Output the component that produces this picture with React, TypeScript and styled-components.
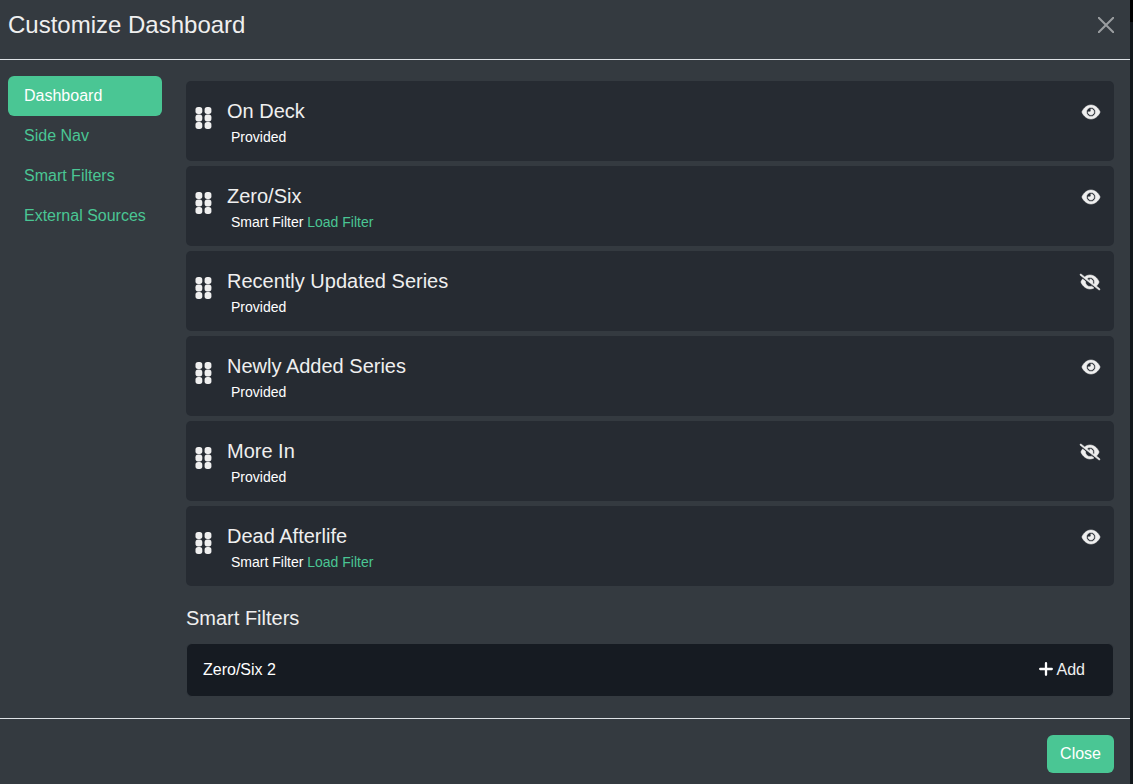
import React, { useState } from "react";
import styled, { createGlobalStyle } from "styled-components";

const GlobalStyle = createGlobalStyle`
  *, *::before, *::after { box-sizing: border-box; }
  body {
    margin: 0;
    background: linear-gradient(#000 22px, #11171b 22px);
    color: #efefef;
    font: 16px/24px "Liberation Sans", Arial, sans-serif;
  }
  button { font: inherit; cursor: pointer; }
`;

const Modal = styled.div`
  display: flex;
  flex-direction: column;
  min-height: 100vh;
  margin-right: 3px;
  background: #343a40;
`;

const Header = styled.header`
  display: flex;
  align-items: center;
  justify-content: space-between;
  padding: 7px 16px 16px 8px;
  border-bottom: 1px solid #dee2e6;
`;

const Title = styled.h1`
  margin: 0;
  font-size: 24px;
  line-height: 36px;
  font-weight: 400;
`;

const CloseIconButton = styled.button`
  display: flex;
  padding: 0;
  border: 0;
  background: none;
  color: #fff;
  opacity: 0.5;
`;

const Body = styled.div`
  display: flex;
  flex: 1;
  gap: 24px;
  padding: 16px 16px 21px 8px;
`;

const Nav = styled.nav`
  flex: 0 0 154px;
  display: flex;
  flex-direction: column;
`;

const NavLink = styled.a<{ $active: boolean }>`
  padding: 8px 16px;
  border-radius: 6px;
  text-decoration: none;
  white-space: nowrap;
  color: ${(p) => (p.$active ? "#fff" : "#4ac694")};
  background: ${(p) => (p.$active ? "#4ac694" : "transparent")};
`;

const Content = styled.main`
  flex: 1;
  min-width: 0;
  padding-top: 5px;
`;

const StreamList = styled.ul`
  display: flex;
  flex-direction: column;
  gap: 5px;
  margin: 0;
  padding: 0;
  list-style: none;
`;

const StreamCard = styled.li`
  display: flex;
  align-items: flex-start;
  min-height: 80px;
  padding: 18px 14px 10px 9px;
  border-radius: 5px;
  background: #262b32;
`;

const Grip = styled.svg`
  flex: none;
  margin: 8px 15px 0 0;
  fill: #efefef;
`;

const StreamText = styled.div`
  flex: 1;
`;

const StreamName = styled.h2`
  margin: 0;
  font-size: 20px;
  line-height: 24px;
  font-weight: 400;
`;

const StreamSource = styled.div`
  padding: 4px 4px 0;
  font-size: 14px;
  line-height: 20px;
  color: #fff;
`;

const FilterLink = styled.a`
  color: #4ac694;
  text-decoration: none;
`;

const VisibilityButton = styled.button`
  display: flex;
  margin-top: 5px;
  padding: 0;
  border: 0;
  background: none;
  color: #efefef;

  svg {
    overflow: visible;
    fill: currentColor;
    stroke: currentColor;
    stroke-width: 18;
  }
`;

const SectionTitle = styled.h2`
  margin: 20px 0 13px;
  font-size: 20px;
  line-height: 24px;
  font-weight: 400;
`;

const FilterItem = styled.li`
  display: flex;
  align-items: center;
  justify-content: space-between;
  padding: 7px 16px;
  border: 1px solid #343a40;
  border-radius: 6px;
  background: #161b22;
  color: #fff;
`;

const AddButton = styled.button`
  display: flex;
  align-items: center;
  gap: 4px;
  padding: 7px 12px;
  border: 0;
  background: none;
  color: #efefef;

  svg { margin-bottom: 2px; }
`;

const Footer = styled.footer`
  display: flex;
  justify-content: flex-end;
  padding: 16px 16px 11px;
  border-top: 1px solid #dee2e6;
`;

const CloseButton = styled.button`
  padding: 7px 13px;
  border: 0;
  border-radius: 6px;
  background: #4ac694;
  color: #fff;
`;

const tabs = ["Dashboard", "Side Nav", "Smart Filters", "External Sources"];

const initialStreams = [
  { name: "On Deck", smart: false, visible: true },
  { name: "Zero/Six", smart: true, visible: true },
  { name: "Recently Updated Series", smart: false, visible: false },
  { name: "Newly Added Series", smart: false, visible: true },
  { name: "More In", smart: false, visible: false },
  { name: "Dead Afterlife", smart: true, visible: true },
];

function GripIcon() {
  return (
    <Grip width="17" height="22" viewBox="0 0 17 22" aria-hidden="true">
      {[0.1, 7.6, 15.1].map((y) =>
        [0.5, 9.6].map((x) => (
          <rect key={`${x}-${y}`} x={x} y={y} width="6.8" height="6.8" rx="2.6" />
        ))
      )}
    </Grip>
  );
}

function EyeIcon() {
  return (
    <svg width="18" height="16" viewBox="0 0 576 512" aria-hidden="true">
      <path d="M279.6 160.4C282.4 160.1 285.2 160 288 160C341 160 384 202.1 384 256C384 309 341 352 288 352C234.1 352 192 309 192 256C192 253.2 192.1 250.4 192.4 247.6C201.7 252.1 212.5 256 224 256C259.3 256 288 227.3 288 192C288 180.5 284.1 169.7 279.6 160.4zM480.6 112.6C527.4 156 558.7 207.1 573.5 243.7C576.8 251.6 576.8 260.4 573.5 268.3C558.7 304 527.4 355.1 480.6 399.4C433.5 443.2 368.8 480 288 480C207.2 480 142.5 443.2 95.42 399.4C48.62 355.1 17.34 304 2.461 268.3C-.8205 260.4-.8205 251.6 2.461 243.7C17.34 207.1 48.62 156 95.42 112.6C142.5 68.84 207.2 32 288 32C368.8 32 433.5 68.84 480.6 112.6zM288 112C208.5 112 144 176.5 144 256C144 335.5 208.5 400 288 400C367.5 400 432 335.5 432 256C432 176.5 367.5 112 288 112z" />
    </svg>
  );
}

function EyeSlashIcon() {
  return (
    <svg width="20" height="16" viewBox="0 0 640 512" aria-hidden="true">
      <path d="M150.7 92.77C195 58.27 251.8 32 320 32C400.8 32 465.5 68.84 512.6 112.6C559.4 156 590.7 207.1 605.5 243.7C608.8 251.6 608.8 260.4 605.5 268.3C592.1 300.6 565.2 346.1 525.6 386.7L630.8 469.1C641.2 477.3 643.1 492.4 634.9 502.8C626.7 513.2 611.6 515.1 601.2 506.9L9.196 42.89C-1.236 34.71-3.065 19.63 5.112 9.196C13.29-1.236 28.37-3.065 38.81 5.112L150.7 92.77zM223.1 149.5L313.4 220.3C317.6 211.8 320 202.2 320 191.1C320 180.5 316.1 169.7 311.6 160.4C314.4 160.1 317.2 159.1 320 159.1C373 159.1 416 202.1 416 255.1C416 269.7 413.1 282.7 407.1 294.5L446.6 324.7C457.7 304.3 464 280.9 464 255.1C464 176.5 399.5 111.1 320 111.1C282.7 111.1 248.6 126.2 223.1 149.5zM320 480C239.2 480 174.5 443.2 127.4 399.4C80.62 355.1 49.34 304 34.46 268.3C31.18 260.4 31.18 251.6 34.46 243.7C44 220.8 60.29 191.2 83.09 161.5L177.4 235.8C176.5 242.4 176 249.1 176 255.1C176 335.5 240.5 400 320 400C338.7 400 356.6 396.4 373 389.9L446.2 447.5C409.9 467.1 367.8 480 320 480z" />
    </svg>
  );
}

export default function App() {
  const [activeTab, setActiveTab] = useState(tabs[0]);
  const [streams, setStreams] = useState(initialStreams);

  const toggle = (name: string) =>
    setStreams((list) =>
      list.map((s) => (s.name === name ? { ...s, visible: !s.visible } : s))
    );

  return (
    <>
      <GlobalStyle />
      <Modal role="dialog" aria-labelledby="modal-title">
        <Header>
          <Title id="modal-title">Customize Dashboard</Title>
          <CloseIconButton type="button" aria-label="Close dialog">
            <svg width="16" height="16" viewBox="0 0 16 16" aria-hidden="true">
              <path d="M.7.7l14.6 14.6M15.3.7L.7 15.3" stroke="currentColor" strokeWidth="2" strokeLinecap="round" />
            </svg>
          </CloseIconButton>
        </Header>
        <Body>
          <Nav>
            {tabs.map((tab) => (
              <NavLink key={tab} href="#" $active={tab === activeTab} onClick={() => setActiveTab(tab)}>
                {tab}
              </NavLink>
            ))}
          </Nav>
          <Content>
            <StreamList>
              {streams.map((s) => (
                <StreamCard key={s.name}>
                  <GripIcon />
                  <StreamText>
                    <StreamName>{s.name}</StreamName>
                    <StreamSource>
                      {s.smart ? (
                        <>
                          Smart Filter <FilterLink href="#">Load Filter</FilterLink>
                        </>
                      ) : (
                        "Provided"
                      )}
                    </StreamSource>
                  </StreamText>
                  <VisibilityButton
                    type="button"
                    aria-label={`Toggle ${s.name}`}
                    aria-pressed={s.visible}
                    onClick={() => toggle(s.name)}
                  >
                    {s.visible ? <EyeIcon /> : <EyeSlashIcon />}
                  </VisibilityButton>
                </StreamCard>
              ))}
            </StreamList>
            <SectionTitle>Smart Filters</SectionTitle>
            <StreamList>
              <FilterItem>
                Zero/Six 2
                <AddButton type="button">
                  <svg width="14" height="14" viewBox="0 0 14 14" aria-hidden="true">
                    <path d="M7 1.2v11.6M1.2 7h11.6" stroke="#fff" strokeWidth="2.3" strokeLinecap="round" />
                  </svg>
                  Add
                </AddButton>
              </FilterItem>
            </StreamList>
          </Content>
        </Body>
        <Footer>
          <CloseButton type="button">Close</CloseButton>
        </Footer>
      </Modal>
    </>
  );
}
